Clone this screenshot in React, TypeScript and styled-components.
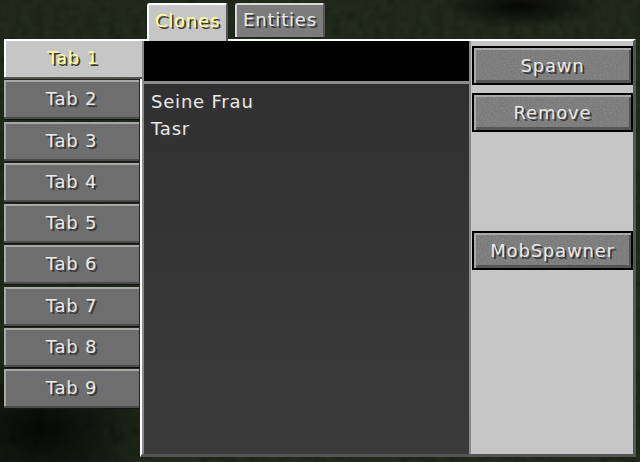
import React from 'react';
import styled, { createGlobalStyle } from 'styled-components';

const noiseSvg = (opacity: number, freq: number) =>
  `url("data:image/svg+xml,${encodeURIComponent(
    `<svg xmlns='http://www.w3.org/2000/svg' width='200' height='200'><filter id='n'><feTurbulence type='fractalNoise' baseFrequency='${freq}' numOctaves='2' stitchTiles='stitch'/><feColorMatrix type='saturate' values='0'/></filter><rect width='100%' height='100%' filter='url(#n)' opacity='${opacity}'/></svg>`
  )}")`;

const Global = createGlobalStyle`
  html, body { margin: 0; padding: 0; }
  body {
    width: 640px;
    height: 462px;
    overflow: hidden;
    background: #1b2215;
    font-family: "DejaVu Sans", "Liberation Sans", sans-serif;
  }
`;

const Screen = styled.div`
  width: 640px;
  height: 462px;
  display: flex;
  flex-direction: column;
  background-color: #242e1e;
  background-image: ${noiseSvg(1, 0.09)},
    radial-gradient(ellipse 80px 22px at 520px 6px, #3c2e22 0%, transparent 100%),
    radial-gradient(ellipse 120px 80px at 40px 430px, #2a3322 0%, transparent 100%);
  background-blend-mode: multiply;
`;

const TopRow = styled.div`
  display: flex;
  align-items: flex-start;
  gap: 7px;
  height: 39px;
  padding-left: 147px;
  position: relative;
  z-index: 2;
`;

const Label = styled.span<{ $active?: boolean }>`
  font-size: 18px;
  letter-spacing: 0.8px;
  line-height: 1;
  color: ${(p) => (p.$active ? '#ffffa0' : '#e8e8e8')};
  text-shadow: 2px 2px 0 ${(p) => (p.$active ? '#3f3f28' : '#383838')};
  white-space: nowrap;
`;

const TopTab = styled.div<{ $active?: boolean; $w: number }>`
  box-sizing: border-box;
  margin-top: 3px;
  width: ${(p) => p.$w}px;
  height: ${(p) => (p.$active ? 38 : 34)}px;
  display: flex;
  align-items: center;
  justify-content: center;
  padding-bottom: ${(p) => (p.$active ? 5 : 2)}px;
  border-radius: 3px 3px 0 0;
  background: ${(p) => (p.$active ? '#c6c6c6' : '#7c7c7c')};
  border-top: 2px solid ${(p) => (p.$active ? '#ffffff' : '#d8d8d8')};
  border-left: 2px solid ${(p) => (p.$active ? '#ffffff' : '#d8d8d8')};
  border-right: 2px solid #555555;
`;

const MainRow = styled.div`
  display: flex;
  align-items: flex-start;
`;

const TabColumn = styled.div`
  margin-left: 4px;
  width: 138px;
  display: flex;
  flex-direction: column;
  gap: 1.25px;
  position: relative;
  z-index: 1;
`;

const SideTab = styled.div<{ $active?: boolean }>`
  box-sizing: border-box;
  width: ${(p) => (p.$active ? 138 : 135)}px;
  height: 40px;
  display: flex;
  align-items: center;
  justify-content: center;
  padding-bottom: 2px;
  background: ${(p) => (p.$active ? '#c6c6c6' : '#6e6e6e')};
  box-shadow: ${(p) =>
    p.$active
      ? 'inset 0 -2px 0 #555555, inset 2px 2px 0 #ffffff'
      : 'inset 0 -1px 0 #141414, inset 0 -3px 0 #4a4a4a, inset 2px 2px 0 #a8a8a8'};
`;

const Panel = styled.div`
  box-sizing: border-box;
  margin-left: -2px;
  width: 496px;
  height: 418px;
  display: flex;
  background: #c6c6c6;
  border-top: 2px solid #ffffff;
  border-left: 2px solid #ffffff;
  border-right: 3px solid #555555;
  border-bottom: 3px solid #555555;
`;

const ListColumn = styled.div`
  box-sizing: border-box;
  width: 329px;
  display: flex;
  flex-direction: column;
  border-left: 2px solid #8b8b8b;
  border-right: 2px solid #8b8b8b;
`;

const SearchBar = styled.div`
  height: 40px;
  background: #000000;
  border-bottom: 3px solid #8b8b8b;
`;

const List = styled.div`
  flex: 1;
  display: flex;
  flex-direction: column;
  padding: 4px 7px;
  background: linear-gradient(#303030, #3b3b3b);
`;

const ListItem = styled.div`
  height: 27px;
  display: flex;
  align-items: center;
`;

const Sidebar = styled.div`
  flex: 1;
  display: flex;
  flex-direction: column;
  gap: 8px;
  padding: 5px 0 0 1px;
`;

const Button = styled.div<{ $gapAbove?: number }>`
  box-sizing: border-box;
  width: 161px;
  height: 39px;
  margin-top: ${(p) => p.$gapAbove ?? 0}px;
  display: flex;
  align-items: center;
  justify-content: center;
  border: 2px solid #000000;
  background-color: #727272;
  background-image: ${noiseSvg(0.35, 0.8)};
  box-shadow: inset 2px 2px 0 #a9a9a9, inset -2px -3px 0 #555555;
`;

const tabs = ['Tab 1', 'Tab 2', 'Tab 3', 'Tab 4', 'Tab 5', 'Tab 6', 'Tab 7', 'Tab 8', 'Tab 9'];
const items = ['Seine Frau', 'Tasr'];

export default function App() {
  return (
    <>
      <Global />
      <Screen>
        <TopRow>
          <TopTab $active $w={81}>
            <Label $active>Clones</Label>
          </TopTab>
          <TopTab $w={90}>
            <Label>Entities</Label>
          </TopTab>
        </TopRow>
        <MainRow>
          <TabColumn>
            {tabs.map((t, i) => (
              <SideTab key={t} $active={i === 0}>
                <Label $active={i === 0}>{t}</Label>
              </SideTab>
            ))}
          </TabColumn>
          <Panel>
            <ListColumn>
              <SearchBar />
              <List>
                {items.map((it) => (
                  <ListItem key={it}>
                    <Label>{it}</Label>
                  </ListItem>
                ))}
              </List>
            </ListColumn>
            <Sidebar>
              <Button>
                <Label>Spawn</Label>
              </Button>
              <Button>
                <Label>Remove</Label>
              </Button>
              <Button $gapAbove={91}>
                <Label>MobSpawner</Label>
              </Button>
            </Sidebar>
          </Panel>
        </MainRow>
      </Screen>
    </>
  );
}
